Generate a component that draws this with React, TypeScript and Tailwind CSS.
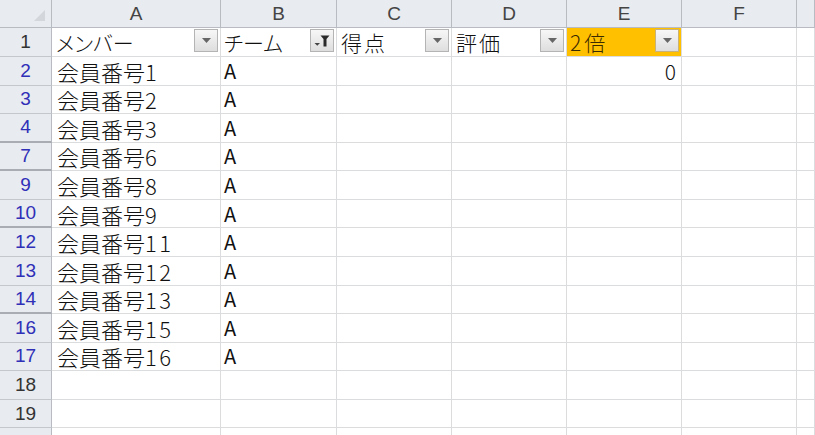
import React from "react";

const COLS = "grid grid-cols-[52px_169px_116px_115px_115px_115px_115px_1fr]";
const cellFont = { fontFamily: '"Noto Sans CJK JP", "Noto Sans", sans-serif' };
const hdrFont = { fontFamily: '"Liberation Sans", "Noto Sans", sans-serif' };

function DropBtn({ filtered = false, tan = false }: { filtered?: boolean; tan?: boolean }) {
  return (
    <div
      className={`absolute right-[2px] top-[1px] h-[23px] w-[24px] flex items-center justify-center border bg-gradient-to-b from-[#f7f7f7] to-[#dedede] ${
        tan ? "border-[#c9b27a]" : "border-[#b4b4b4]"
      }`}
    >
      {filtered ? (
        <svg width="18" height="14" viewBox="0 0 18 14">
          <path d="M1.5 9 L7 9 L4.25 11.8 Z" fill="#444" />
          <path d="M7.5 1.5 L16.5 1.5 L13.5 5 L13.5 12.5 L10.5 12.5 L10.5 5 Z" fill="#2a2a2a" />
        </svg>
      ) : (
        <svg width="11" height="7" viewBox="0 0 11 7">
          <path d="M1 1 L10 1 L5.5 6 Z" fill="#666" />
        </svg>
      )}
    </div>
  );
}

type Row = { n: number; label?: string; blue: boolean; thick?: boolean; k?: string; d?: string; b?: string; e?: string };

const rows: Row[] = [
  { n: 2, blue: true, k: "会員番号", d: "1", b: "A", e: "0" },
  { n: 3, blue: true, k: "会員番号", d: "2", b: "A" },
  { n: 4, blue: true, thick: true, k: "会員番号", d: "3", b: "A" },
  { n: 7, blue: true, thick: true, k: "会員番号", d: "6", b: "A" },
  { n: 9, blue: true, k: "会員番号", d: "8", b: "A" },
  { n: 10, blue: true, thick: true, k: "会員番号", d: "9", b: "A" },
  { n: 12, blue: true, k: "会員番号", d: "11", b: "A" },
  { n: 13, blue: true, k: "会員番号", d: "12", b: "A" },
  { n: 14, blue: true, thick: true, k: "会員番号", d: "13", b: "A" },
  { n: 16, blue: true, k: "会員番号", d: "15", b: "A" },
  { n: 17, blue: true, k: "会員番号", d: "16", b: "A" },
  { n: 18, blue: false },
  { n: 19, blue: false },
  { n: 20, label: "", blue: false },
];

const cell = "relative border-r border-b border-[#dadcdd] flex items-center whitespace-nowrap";
const rowHdr = "flex items-center justify-center border-r border-[#b8bcc2] bg-[#e8ebef] text-[19px] leading-[24px]";

export default function App() {
  return (
    <div className="h-[435px] w-[815px] overflow-hidden bg-white text-[#111]">
      {/* column header */}
      <div className={`${COLS} h-[28px]`} style={hdrFont}>
        <div className="relative border-r border-b border-[#b8bcc2] bg-[#e8ebef]">
          <svg className="absolute right-[6px] bottom-[6px]" width="11" height="11" viewBox="0 0 11 11">
            <path d="M11 0 L11 11 L0 11 Z" fill="#d3d6da" />
          </svg>
        </div>
        {["A", "B", "C", "D", "E", "F", ""].map((c, i) => (
          <div
            key={i}
            className="flex items-center justify-center border-r border-b border-[#b8bcc2] bg-[#e8ebef] text-[19px] leading-[24px] text-[#444]"
          >
            {c}
          </div>
        ))}
      </div>
      {/* row 1 */}
      <div className={`${COLS} h-[29px]`}>
        <div className={`${rowHdr} border-b border-b-[#c4c8cd] text-[#333]`} style={hdrFont}>
          1
        </div>
        <div className={cell} style={cellFont}>
          <span className="pl-[4px] text-[21px] leading-[26px] font-light [font-feature-settings:'palt']">メンバー</span>
          <DropBtn />
        </div>
        <div className={cell} style={cellFont}>
          <span className="pl-[3px] text-[21px] leading-[26px] font-light [font-feature-settings:'palt']">チーム</span>
          <DropBtn filtered />
        </div>
        <div className={cell} style={cellFont}>
          <span className="pl-[4px] text-[21px] leading-[26px] font-light tracking-[2px]">得点</span>
          <DropBtn />
        </div>
        <div className={cell} style={cellFont}>
          <span className="pl-[4px] text-[21px] leading-[26px] font-light tracking-[2px]">評価</span>
          <DropBtn />
        </div>
        <div className={`${cell} bg-[#ffc000]`} style={cellFont}>
          <span className="pl-[3px] text-[21px] leading-[26px] font-light text-[#3a2a00]">
            <span className="tracking-[3px]">2</span>倍
          </span>
          <DropBtn tan />
        </div>
        <div className={cell}></div>
        <div className={cell}></div>
      </div>
      {rows.map((r) => (
        <div key={r.n} className={`${COLS} h-[28.57px]`}>
          <div
            className={`${rowHdr} ${
              r.thick ? "border-b-2 border-b-[#a9adb3]" : "border-b border-b-[#c4c8cd]"
            } ${r.blue ? "text-[#2f2fb8]" : "text-[#333]"}`}
            style={hdrFont}
          >
            {r.label ?? r.n}
          </div>
          <div className={cell} style={cellFont}>
            <span className="pl-[5px] text-[22px] leading-[26px] font-light">
              {r.k ?? ""}
              <span className="tracking-[2.5px]">{r.d ?? ""}</span>
            </span>
          </div>
          <div className={cell} style={cellFont}>
            <span className="pl-[3px] text-[20px] leading-[24px]">{r.b ?? ""}</span>
          </div>
          <div className={cell}></div>
          <div className={cell}></div>
          <div className={`${cell} justify-end`} style={cellFont}>
            <span className="pr-[5px] text-[21px] leading-[26px] font-light">{r.e ?? ""}</span>
          </div>
          <div className={cell}></div>
          <div className={cell}></div>
        </div>
      ))}
    </div>
  );
}
